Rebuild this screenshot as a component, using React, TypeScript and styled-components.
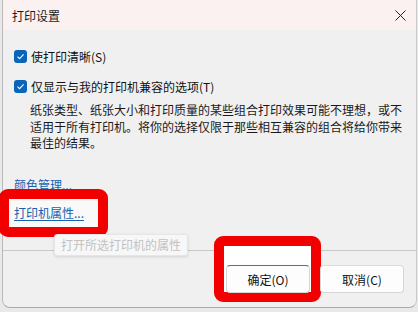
import React from "react";
import styled, { createGlobalStyle } from "styled-components";

const GlobalStyle = createGlobalStyle`
  html, body {
    margin: 0;
    padding: 0;
    background: #e9e9e9;
  }
  body {
    font-family: "Noto Sans CJK SC", "Noto Sans", "Liberation Sans", sans-serif;
    overflow: hidden;
  }
`;

const Dialog = styled.div`
  position: relative;
  margin-left: 2px;
  width: 415px;
  display: flex;
  flex-direction: column;
  background: #f0f0f0;
  border-left: 1px solid #b9b9b9;
  border-right: 1px solid #c9c9c9;
  border-bottom: 1px solid #a9a9a9;
  border-radius: 0 0 8px 8px;
  box-sizing: border-box;
`;

const TitleBar = styled.div`
  height: 30px;
  display: flex;
  align-items: center;
  justify-content: space-between;
  padding: 0 8px 0 9px;
  background: #fbf1f1;
  color: #1b1b1b;
  font-size: 12px;
`;

const CloseIcon = styled.svg`
  width: 11px;
  height: 11px;
  margin-right: 2px;
`;

const Body = styled.div`
  display: flex;
  flex-direction: column;
  align-items: flex-start;
  padding: 16px 12px 29px 11px;
  height: 220px;
  box-sizing: border-box;
`;

const CheckRow = styled.label<{ $gap?: number }>`
  display: flex;
  align-items: center;
  gap: 4px;
  height: 20px;
  margin-top: ${(p) => p.$gap ?? 0}px;
  font-size: 12px;
  color: #111;
`;

const Box = styled.span`
  width: 13px;
  height: 13px;
  border-radius: 3px;
  background: #0a64b8;
  display: flex;
  align-items: center;
  justify-content: center;
`;

const Note = styled.p`
  margin: 6px 0 0 16px;
  font-size: 12px;
  line-height: 16.5px;
  color: #1a1a1a;
  width: 376px;
`;

const Link = styled.a<{ $underline?: boolean; $gap: number }>`
  position: relative;
  display: inline-block;
  margin-top: ${(p) => p.$gap}px;
  font-size: 12px;
  line-height: 16px;
  color: #1563b0;
  text-decoration: ${(p) => (p.$underline ? "underline" : "none")};
  text-underline-offset: 2px;
`;

const LinkText = styled.span`
  position: relative;
  z-index: 1;
`;

const Marked = styled.span<{ $l: number; $t: number; $r: number; $b: number }>`
  position: absolute;
  left: ${(p) => p.$l}px;
  top: ${(p) => p.$t}px;
  right: ${(p) => p.$r}px;
  bottom: ${(p) => p.$b}px;
  border: 10px solid #f20000;
  border-radius: 9px;
  background: #f9f9f9;
  z-index: 0;
`;

const Tooltip = styled.div`
  position: absolute;
  left: 51px;
  top: 234px;
  padding: 1px 6px 2px;
  background: #f7f7f7;
  border: 1px solid #e6e6e6;
  border-radius: 3px;
  box-shadow: 0 1px 3px rgba(0, 0, 0, 0.12);
  color: #c2c2c2;
  font-size: 12px;
  line-height: 17px;
  z-index: 5;
`;

const Footer = styled.div`
  display: flex;
  justify-content: flex-end;
  gap: 10px;
  padding: 14px 12px 14px 0;
  border-top: 1px solid #c8c8c8;
`;

const Button = styled.button<{ $primary?: boolean }>`
  position: relative;
  width: 84px;
  height: 28px;
  padding: 0;
  background: #fdfdfd;
  border: 1px solid #d6d6d6;
  border-top-color: ${(p) => (p.$primary ? "#2d7db8" : "#dcdcdc")};
  border-radius: 4px;
  font-family: inherit;
  font-size: 12px;
  color: #111;
`;

const ButtonLabel = styled.span`
  position: relative;
  z-index: 1;
`;

const ButtonMark = styled.span`
  position: absolute;
  left: -12px;
  top: -29px;
  right: -11px;
  bottom: -9px;
  border: 10px solid #f20000;
  border-radius: 9px;
  background: #ffffff;
  z-index: 0;
`;

const OkWrap = styled.div`
  position: relative;
  display: flex;
`;

export default function App() {
  return (
    <>
      <GlobalStyle />
      <Dialog>
        <TitleBar>
          <span>打印设置</span>
          <CloseIcon viewBox="0 0 11 11">
            <path d="M0.5 0.5 L10.5 10.5 M10.5 0.5 L0.5 10.5" stroke="#222" strokeWidth="1" />
          </CloseIcon>
        </TitleBar>
        <Body>
          <CheckRow>
            <Box>
              <svg width="9" height="9" viewBox="0 0 9 9">
                <path d="M1.5 4.6 L3.6 6.6 L7.6 2.4" fill="none" stroke="#fff" strokeWidth="1.1" />
              </svg>
            </Box>
            使打印清晰(S)
          </CheckRow>
          <CheckRow $gap={10}>
            <Box>
              <svg width="9" height="9" viewBox="0 0 9 9">
                <path d="M1.5 4.6 L3.6 6.6 L7.6 2.4" fill="none" stroke="#fff" strokeWidth="1.1" />
              </svg>
            </Box>
            仅显示与我的打印机兼容的选项(T)
          </CheckRow>
          <Note>
            纸张类型、纸张大小和打印质量的某些组合打印效果可能不理想，或不适用于所有打印机。将你的选择仅限于那些相互兼容的组合将给你带来最佳的结果。
          </Note>
          <Link $gap={25}>颜色管理...</Link>
          <Link $gap={12} $underline>
            <Marked $l={-15} $t={-16} $r={-24} $b={-16} />
            <LinkText>打印机属性...</LinkText>
          </Link>
        </Body>
        <Footer>
          <OkWrap>
            <ButtonMark />
            <Button $primary>
              <ButtonLabel>确定(O)</ButtonLabel>
            </Button>
          </OkWrap>
          <Button>
            <ButtonLabel>取消(C)</ButtonLabel>
          </Button>
        </Footer>
        <Tooltip>打开所选打印机的属性</Tooltip>
      </Dialog>
    </>
  );
}
